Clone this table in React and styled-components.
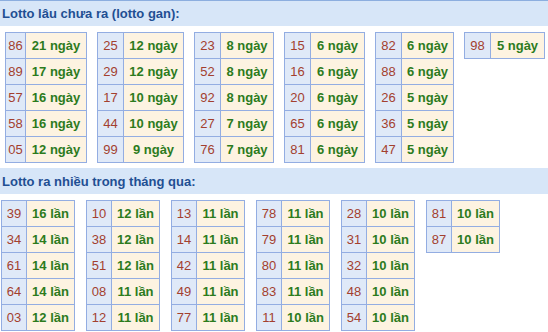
import React from "react";
import styled, { createGlobalStyle } from "styled-components";

const Global = createGlobalStyle`
    html, body {
        margin: 0;
        padding: 0;
        background: #ffffff;
    }
    body {
        font-family: "Liberation Sans", Arial, sans-serif;
        width: 548px;
        height: 332px;
        overflow: hidden;
    }
`;

const Title = styled.div`
    height: 25px;
    line-height: 25px;
    border-top: 1px solid ${(p) => (p.$line ? "#8caedf" : "#d7e6f8")};
    background: #d7e6f8;
    color: #1f4f93;
    font-size: 13px;
    font-weight: bold;
    padding-left: 2px;
`;

const Group = styled.div`
    display: flex;
    align-items: flex-start;
    gap: ${(p) => p.$gap}px;
    padding-left: ${(p) => p.$left}px;
    margin: 6px 0 5px;
`;

const Board = styled.div`
    display: grid;
    grid-template-columns: ${(p) => p.$num}px ${(p) => p.$val}px;
    border-top: 1px solid #93ade2;
    border-left: 1px solid #93ade2;
`;

const Num = styled.div`
    box-sizing: border-box;
    height: 26px;
    line-height: 25px;
    border-right: 1px solid #93ade2;
    border-bottom: 1px solid #93ade2;
    background: #dfe9f8;
    color: #a33f2f;
    font-size: 13px;
    text-align: center;
`;

const Val = styled(Num)`
    background: #fdf3e1;
    color: #2c7b1d;
    font-weight: bold;
`;

const gan = [
    { num: 20, val: 61, rows: [["86", 21], ["89", 17], ["57", 16], ["58", 16], ["05", 12]] },
    { num: 26, val: 60, rows: [["25", 12], ["29", 12], ["17", 10], ["44", 10], ["99", 9]] },
    { num: 26, val: 53, rows: [["23", 8], ["52", 8], ["92", 8], ["27", 7], ["76", 7]] },
    { num: 26, val: 54, rows: [["15", 6], ["16", 6], ["20", 6], ["65", 6], ["81", 6]] },
    { num: 26, val: 52, rows: [["82", 6], ["88", 6], ["26", 5], ["36", 5], ["47", 5]] },
    { num: 26, val: 54, rows: [["98", 5]] },
];

const hot = [
    [["39", 16], ["34", 14], ["61", 14], ["64", 14], ["03", 12]],
    [["10", 12], ["38", 12], ["51", 12], ["08", 11], ["12", 11]],
    [["13", 11], ["14", 11], ["42", 11], ["49", 11], ["77", 11]],
    [["78", 11], ["79", 11], ["80", 11], ["83", 11], ["11", 10]],
    [["28", 10], ["31", 10], ["32", 10], ["48", 10], ["54", 10]],
    [["81", 10], ["87", 10]],
];

const Table = ({ num, val, rows, unit }) => (
    <Board $num={num} $val={val}>
        {rows.map(([n, c]) => (
            <React.Fragment key={n}>
                <Num>{n}</Num>
                <Val>
                    {c} {unit}
                </Val>
            </React.Fragment>
        ))}
    </Board>
);

const App = () => {
    return (
        <>
            <Global />
            <Title $line>Lotto lâu chưa ra (lotto gan):</Title>
            <Group $gap={10} $left={5}>
                {gan.map((t, i) => (
                    <Table key={i} num={t.num} val={t.val} rows={t.rows} unit="ngày" />
                ))}
            </Group>
            <Title>Lotto ra nhiều trong tháng qua:</Title>
            <Group $gap={11} $left={1}>
                {hot.map((rows, i) => (
                    <Table key={i} num={25} val={48} rows={rows} unit="lần" />
                ))}
            </Group>
        </>
    );
};

export default App;
